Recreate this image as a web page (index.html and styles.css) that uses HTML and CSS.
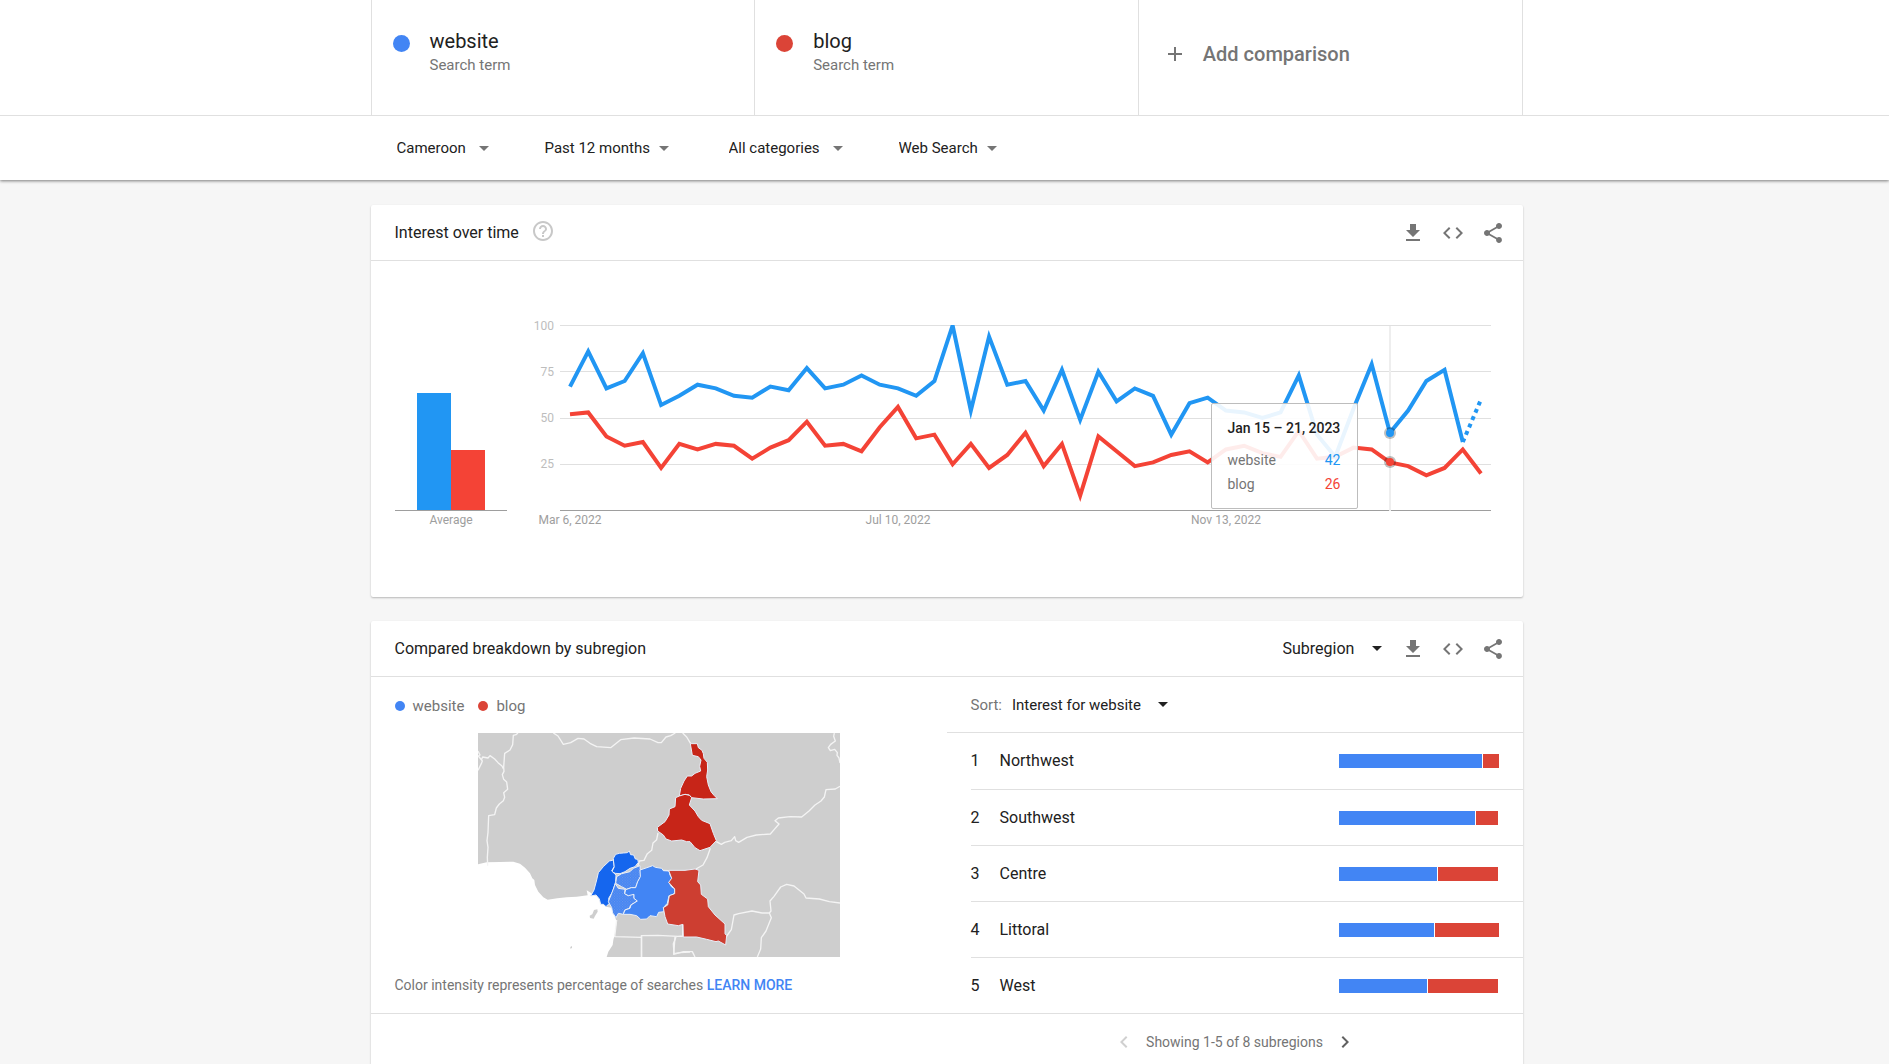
FILE: index.html
```html
<!DOCTYPE html>
<html lang="en">
<head>
<meta charset="utf-8">
<meta name="viewport" content="width=device-width, initial-scale=1">
<title>website, blog - Explore</title>
<link rel="stylesheet" href="styles.css">
</head>
<body>
<svg class="sprite" aria-hidden="true">
  <symbol id="i-download" viewBox="0 0 24 24"><path d="M19 9h-4V3H9v6H5l7 7 7-7zM5 18v2h14v-2H5z"/></symbol>
  <symbol id="i-code" viewBox="0 0 24 24"><path d="M9.4 16.6L4.8 12l4.6-4.6L8 6l-6 6 6 6 1.4-1.4zm5.2 0l4.6-4.6-4.6-4.6L16 6l6 6-6 6-1.4-1.4z"/></symbol>
  <symbol id="i-share" viewBox="0 0 24 24"><path d="M18 16.08c-.76 0-1.44.3-1.96.77L8.91 12.7c.05-.23.09-.46.09-.7s-.04-.47-.09-.7l7.05-4.11c.54.5 1.25.81 2.04.81 1.66 0 3-1.34 3-3s-1.34-3-3-3-3 1.34-3 3c0 .24.04.47.09.7L8.04 9.81C7.5 9.31 6.79 9 6 9c-1.66 0-3 1.34-3 3s1.34 3 3 3c.79 0 1.5-.31 2.04-.81l7.12 4.16c-.05.21-.08.43-.08.65 0 1.61 1.31 2.92 2.92 2.92 1.61 0 2.92-1.31 2.92-2.92s-1.31-2.92-2.92-2.92z"/></symbol>
</svg>

<header class="top">
  <div class="terms shell">
    <div class="term">
      <span class="dot dot-blue"></span>
      <div><div class="term-name">website</div><div class="term-type">Search term</div></div>
    </div>
    <div class="term">
      <span class="dot dot-red"></span>
      <div><div class="term-name">blog</div><div class="term-type">Search term</div></div>
    </div>
    <button class="add" type="button">
      <svg class="icon" viewBox="0 0 24 24"><path d="M19 13h-6v6h-2v-6H5v-2h6V5h2v6h6v2z"/></svg>
      Add comparison
    </button>
  </div>
  <div class="filter-bar">
    <form class="filters shell">
      <label class="drop"><select aria-label="Region"><option>Cameroon</option></select></label>
      <label class="drop drop-tight"><select aria-label="Time range"><option>Past 12 months</option></select></label>
      <label class="drop"><select aria-label="Category"><option>All categories</option></select></label>
      <label class="drop drop-tight"><select aria-label="Search type"><option>Web Search</option></select></label>
    </form>
  </div>
</header>

<main class="shell cards">
  <section class="card">
    <div class="card-head">
      <h2>Interest over time</h2>
      <button class="help" type="button" aria-label="Help">
        <svg class="icon" viewBox="0 0 24 24"><path d="M11 18h2v-2h-2v2zm1-16C6.48 2 2 6.48 2 12s4.48 10 10 10 10-4.48 10-10S17.52 2 12 2zm0 18c-4.41 0-8-3.59-8-8s3.59-8 8-8 8 3.59 8 8-3.59 8-8 8zm0-14c-2.21 0-4 1.79-4 4h2c0-1.1.9-2 2-2s2 .9 2 2c0 2-3 1.75-3 5h2c0-2.25 3-2.5 3-5 0-2.21-1.79-4-4-4z"/></svg>
      </button>
      <div class="actions">
        <button class="act" type="button" aria-label="Download"><svg class="icon"><use href="#i-download"/></svg></button>
        <button class="act" type="button" aria-label="Embed"><svg class="icon"><use href="#i-code"/></svg></button>
        <button class="act" type="button" aria-label="Share"><svg class="icon"><use href="#i-share"/></svg></button>
      </div>
    </div>
    <div class="chart">
      <svg class="chart-svg" viewBox="0 0 1152 336" role="img" aria-label="Interest over time for website and blog">
        <defs><clipPath id="plot"><rect x="189" y="64" width="931" height="186"/></clipPath></defs>
        <rect class="bar-a" x="46" y="132" width="34" height="117"/>
        <rect class="bar-b" x="80" y="189" width="34" height="60"/>
        <path class="axis" d="M24 249.5H136M189 249.5H1120"/>
        <path class="grid" d="M189 64.500H1120M189 110.500H1120M189 157.500H1120M189 203.500H1120"/>
        <path class="cursor" d="M1019 65V250"/>
        <g class="tick-y">
          <text x="183" y="69">100</text><text x="183" y="115">75</text>
          <text x="183" y="161">50</text><text x="183" y="207">25</text>
        </g>
        <g class="tick-x">
          <text x="80" y="263">Average</text><text x="199" y="263">Mar 6, 2022</text>
          <text x="527" y="263">Jul 10, 2022</text><text x="855" y="263">Nov 13, 2022</text>
        </g>
        <!-- series are in data units: week index, interest -->
        <g clip-path="url(#plot)">
          <g transform="translate(199 249.500) scale(18.220 -1.850)">
            <polyline class="line line-b" points="0,52 1,53 2,40 3,35 4,37 5,23 6,36 7,33 8,36 9,35 10,28 11,34 12,38 13,48 14,35 15,36 16,32 17,45 18,56 19,39 20,41 21,25 22,36 23,23 24,30 25,42 26,24 27,36 28,8 29,40 30,32 31,24 32,26 33,30 34,32 35,26 36,33 37,35 38,31 39,29 40,43 41,28 42,29 43,34 44,33 45,26 46,24 47,19 48,23 49,33 50,20"/>
            <polyline class="line line-a" points="0,67 1,86 2,66 3,70 4,85 5,57 6,62 7,68 8,66 9,62 10,61 11,67 12,65 13,77 14,66 15,68 16,73 17,68 18,66 19,62 20,70 21,100 22,54 23,94 24,68 25,70 26,54 27,76 28,49 29,75 30,59 31,66 32,62 33,41 34,58 35,61 36,54 37,53 38,50 39,53 40,73 41,41 42,29 43,55 44,79 45,42 46,54 47,70 48,76 49,37"/>
            <polyline class="line line-a dotted" points="49,37 50,60"/>
          </g>
        </g>
        <circle class="halo" cx="1019" cy="172" r="6"/><circle class="pt-a" cx="1019" cy="172" r="4"/>
        <circle class="halo" cx="1019" cy="201" r="6"/><circle class="pt-b" cx="1019" cy="201" r="4"/>
      </svg>
      <div class="tooltip">
        <div class="tip-date">Jan 15 – 21, 2023</div>
        <div class="tip-row"><span>website</span><span class="tip-a">42</span></div>
        <div class="tip-row"><span>blog</span><span class="tip-b">26</span></div>
      </div>
    </div>
  </section>

  <section class="card card-last">
    <div class="card-head">
      <h2>Compared breakdown by subregion</h2>
      <div class="actions">
        <label class="drop drop-dark drop-level"><select aria-label="Resolution"><option>Subregion</option></select></label>
        <button class="act" type="button" aria-label="Download"><svg class="icon"><use href="#i-download"/></svg></button>
        <button class="act" type="button" aria-label="Embed"><svg class="icon"><use href="#i-code"/></svg></button>
        <button class="act" type="button" aria-label="Share"><svg class="icon"><use href="#i-share"/></svg></button>
      </div>
    </div>
    <div class="split">
      <div class="map-side">
        <div class="legend">
          <span class="key"><span class="dot dot-blue"></span>website</span>
          <span class="key"><span class="dot dot-red"></span>blog</span>
        </div>
        <svg class="map" viewBox="0 0 1086 672" role="img" aria-label="Map of Cameroon by subregion">
          <defs>
            <pattern id="hatch" width="8" height="8" patternUnits="userSpaceOnUse"><rect width="8" height="8" fill="#4285f4"/><path d="M0 0h3v3H0zM4 4h3v3H4z" fill="#6c96ea"/></pattern>
          </defs>
          <rect width="1086" height="672" fill="#cecece"/>
          <g transform="translate(-24 -24)">
            <path fill="#fff" d="M24 418L50 412 90 411 130 410 150 416 165 428 180 445 187 460 193 465 195 480 205 500 220 517 233 524 262 520 290 517 320 515 353 511 350 496 362 503 383 515 408 545 425 548 435 575 440 590 436 620 430 645 428 660 415 680 410 696 24 696z"/>
            <path fill="#cecece" d="M372 555l10 -2 1 7 -8 13 -4 8 -11 -2 -1 -7 8 -4zM301 666l5-3v6l-5 2z"/>
            <g class="border">
              <path d="M144 24l-6 5-8 2-2 28-8 16-16 10-3 42 1 12-5 10 4 14 9 8 3 22-12 10 3 14-4 10-12 10-9 12-5 20-18 3-2 50-3 25 3 20-2 30 1 25"/>
              <path d="M24 78l6 12-5 3 12 15-3 8-10 20M34 105l4-9 16 3 6-7 14 10 10 11 12 10 4 8"/>
              <path d="M250 24l14 9 16 25 22-5 22-13 18 2 18 13 20 10 42 3 30-24 40-5 48 3 24 11 10 0 14-17 14-4 14-8"/>
              <path d="M564 324l-4 20-11 10-4 22-13 10-10 20-14 2-5 16M511 434l85 3h74"/>
              <path d="M440 585l-6 50 80 2V632l50-1 60 3 14-1M514 635v61M638 636V600M618 636l-8 20 2 30 18-3 30-2"/>
            </g>
            <path class="region" fill="#1566ee" d="M430 400L437 388 448 385 460 384 472 383 478 378 482 389 491 390 496 402 503 403 505 412 495 425 480 430 465 440 450 446 436 445 425 440 432 428z"/>
            <path class="region" fill="#1566ee" d="M430 405L432 425 425 438 438 450 437 470 428 500 416 520 418 535 408 545 400 538 392 538 388 522 378 510 362 513 372 495 380 465 385 443 400 425 418 408z"/>
            <path class="region" fill="url(#hatch)" d="M440 455L455 446 480 440 490 430 510 422 512 455 503 470 497 488 484 488 470 493 455 485 437 475z"/>
            <path class="region" fill="url(#hatch)" d="M436 476L445 490 465 493 464 506 475 512 485 506 492 508 492 520 502 528 482 540 478 550 464 555 460 568 445 565 438 578 428 564 425 548 415 530 425 505z"/>
            <path class="region" fill="#4285f4" d="M510 435L525 430 548 422 556 427 575 430 580 437 597 438 600 450 606 460 597 473 605 486 614 491 614 503 610 508 597 512 592 535 580 548 582 560 566 562 560 575 540 572 530 582 512 583 500 572 480 568 460 568 465 555 480 550 483 540 502 528 492 520 492 508 475 512 464 506 467 494 484 488 497 488 503 470 511 455z"/>
          </g>
          <g transform="translate(486 -24)">
            <g class="border">
              <path d="M128 24l12 12 12 20M229 350l15 8 10-6 20-5 10-12 3 12 9 5 25-15 28-7 42-3 12-14 14-16-12-10 10-8 35-4 35 1 22-18 18-18 18-12 10-12 5-22 28-2 14-8"/>
              <path d="M583 24l-2 10 5 14-14 10-7 10 6 9 13-4 8 10-1 8 6 8 3 15"/>
              <path d="M211 370l-10 28-12 22-21 12"/>
              <path d="M258 636l16-22 8-44 14-4 40-8 30 6 22 0 5-6-3-30 12-14 20-28 18-8 22 5 30 24 6 12 40 3 30 8 32 4M388 564l6 14-16 40-14 20-2 34-10 24"/>
              <path d="M5 630v66M105 636l-4 52 30-8 26 0 8 16"/>
            </g>
            <path class="region" fill="#c72518" d="M151 56L172 56 175 68 186 76 190 86 192 100 202 112 203 135 200 155 205 180 213 200 222 211 232 221 190 222 155 218 148 210 135 208 118 213 122 190 132 168 142 153 155 153 165 145 182 138 179 124 183 105 175 95 157 91z"/>
            <path class="region" fill="#c72518" d="M118 213L135 208 148 211 155 218 148 240 165 258 175 275 185 286 210 296 220 325 229 347 210 367 180 377 165 368 150 350 140 350 125 345 95 348 78 342 70 330 53 318 52 307 75 290 87 270 88 252 105 245 107 218z"/>
            <path class="region" fill="#cd3e31" d="M86 436L135 436 165 432 177 436 173 470 182 480 184 508 203 522 205 545 225 570 255 597 255 626 260 632 257 660 235 648 228 650 200 643 170 636 130 636 129 598 115 602 83 597 75 575 70 548 83 540 88 512 104 506 104 492 86 472 95 460z"/>
          </g>
        </svg>
        <p class="note">Color intensity represents percentage of searches <a href="#learn">LEARN MORE</a></p>
      </div>
      <div class="list-side">
        <div class="sort">
          <label for="sort">Sort:</label>
          <span class="drop drop-dark"><select id="sort"><option>Interest for website</option></select></span>
        </div>
        <table class="ranks">
          <tbody>
          <tr><td class="num">1</td><td>Northwest</td><td class="bar"><div class="split-bar"><i class="seg-a" style="width:143px"></i><i class="seg-b" style="width:16px"></i></div></td></tr>
          <tr><td class="num">2</td><td>Southwest</td><td class="bar"><div class="split-bar"><i class="seg-a" style="width:136px"></i><i class="seg-b" style="width:22px"></i></div></td></tr>
          <tr><td class="num">3</td><td>Centre</td><td class="bar"><div class="split-bar"><i class="seg-a" style="width:98px"></i><i class="seg-b" style="width:60px"></i></div></td></tr>
          <tr><td class="num">4</td><td>Littoral</td><td class="bar"><div class="split-bar"><i class="seg-a" style="width:95px"></i><i class="seg-b" style="width:64px"></i></div></td></tr>
          <tr><td class="num">5</td><td>West</td><td class="bar"><div class="split-bar"><i class="seg-a" style="width:88px"></i><i class="seg-b" style="width:70px"></i></div></td></tr>
          </tbody>
        </table>
      </div>
    </div>
    <div class="card-foot">
      <div class="pager">
        <button class="page-btn" type="button" aria-label="Previous" disabled><svg class="icon" viewBox="0 0 24 24"><path d="M15.410 7.410L14 6l-6 6 6 6 1.410-1.410L10.830 12z"/></svg></button>
        <span>Showing 1-5 of 8 subregions</span>
        <button class="page-btn" type="button" aria-label="Next"><svg class="icon" viewBox="0 0 24 24"><path d="M10 6L8.590 7.410 13.170 12l-4.580 4.590L10 18l6-6z"/></svg></button>
      </div>
    </div>
  </section>
</main>
</body>
</html>
```
FILE: styles.css
```css
* { box-sizing: border-box; }

body {
  margin: 0;
  background: #f6f6f6;
  color: #212121;
  font: 16px/24px Roboto, "Liberation Sans", sans-serif;
}

button, select {
  margin: 0;
  padding: 0;
  border: 0;
  background: none;
  color: inherit;
  font: inherit;
}

.sprite { position: absolute; width: 0; height: 0; }
.icon { display: block; width: 24px; height: 24px; fill: currentColor; }

/* the page column sits slightly right of centre */
.top, .cards { padding-left: 4px; }
.shell { max-width: 1152px; margin: 0 auto; }

.top {
  background: #fff;
  box-shadow: 0 1px 3px rgba(0, 0, 0, .5);
}

.terms {
  display: grid;
  grid-template-columns: repeat(3, 1fr);
  height: 115px;
  border-right: 1px solid #e0e0e0;
}
.term, .add { border-left: 1px solid #e0e0e0; }
.term {
  display: flex;
  gap: 20px;
  padding: 28px 21px;
}
.dot { flex: none; border-radius: 50%; }
.dot-blue { background: #4285f4; }
.dot-red { background: #db4437; }
.term .dot { width: 17px; height: 17px; margin-top: 7px; }
.term-name { font-size: 20px; line-height: 26px; }
.term-type { color: #757575; font-size: 15px; line-height: 22px; }
.add {
  display: flex;
  align-items: center;
  gap: 16px;
  padding: 0 24px 8px;
  color: #757575;
  font-size: 20px;
  font-weight: 500;
}

.filter-bar {
  margin-left: -4px;
  padding-left: 4px;
  border-top: 1px solid #e0e0e0;
}
.filters {
  display: flex;
  align-items: center;
  gap: 56px;
  height: 64px;
  padding: 0 26px;
  font-size: 15px;
}

.drop { display: inline-flex; align-items: center; gap: 12px; }
.drop select { appearance: none; height: 24px; }
.drop::after {
  content: "";
  border: 5px solid transparent;
  border-top-color: #757575;
  border-bottom: 0;
}
.drop-tight { gap: 8px; margin-right: 4px; }
.drop-dark { gap: 17px; }
.drop-dark::after { border-top-color: #212121; }
.drop-level { margin-right: 11px; }

.cards {
  display: grid;
  gap: 24px;
  max-width: 1156px;
  margin-top: 25px;
}
.card {
  min-width: 0;
  border-radius: 2px;
  background: #fff;
  box-shadow: 0 1px 2px rgba(0, 0, 0, .25);
}
.card-last { border-radius: 2px 2px 0 0; }
.card-head {
  display: flex;
  align-items: center;
  height: 56px;
  padding: 0 10px 0 24px;
  border-bottom: 1px solid #e0e0e0;
}
h2 { margin: 0; font-size: 16px; font-weight: 400; line-height: 24px; }
.help { margin: 0 0 4px 12px; color: #c8c8c8; }
.actions { display: flex; align-items: center; margin-left: auto; }
.act { display: grid; place-items: center; width: 40px; height: 40px; color: #757575; }

.chart { position: relative; }
.chart-svg { display: block; width: 100%; font-size: 12px; }
.bar-a { fill: #2196f3; }
.bar-b { fill: #f44336; }
.grid { stroke: #e0e0e0; }
.axis { stroke: #9e9e9e; }
.cursor { stroke: #eee; stroke-width: 2; }
.tick-y { fill: #bdbdbd; text-anchor: end; }
.tick-x { fill: #9e9e9e; text-anchor: middle; }
.line { fill: none; stroke-width: 4; vector-effect: non-scaling-stroke; stroke-miterlimit: 10; }
.line-a { stroke: #2196f3; }
.line-b { stroke: #f44336; }
.dotted { stroke-dasharray: 4 4; }
.pt-a { fill: #2196f3; }
.pt-b { fill: #f44336; }
.halo { fill: #000; fill-opacity: .25; }

.tooltip {
  position: absolute;
  top: 142px;
  right: 165px;
  width: 147px;
  height: 106px;
  padding: 12px 16px;
  border: 1px solid #bdbdbd;
  border-radius: 2px;
  background: rgba(255, 255, 255, .9);
  font-size: 14px;
  line-height: 24px;
}
.tip-date { margin-bottom: 8px; font-weight: 500; white-space: nowrap; }
.tip-row { display: flex; justify-content: space-between; color: #757575; }
.tip-a { color: #2196f3; }
.tip-b { color: #f44336; }

.split { display: grid; grid-template-columns: 1fr 1fr; }
.map-side { padding: 17px 24px 0; }
.legend { display: flex; gap: 14px; color: #757575; font-size: 15px; }
.key { display: flex; align-items: center; gap: 8px; }
.key .dot { width: 10px; height: 10px; }
.map { display: block; width: 362px; max-width: 100%; margin: 15px auto 0; }
.border path { fill: none; stroke: #f4f4f4; stroke-width: 4; stroke-linejoin: round; }
.region { stroke: #e8eef8; stroke-width: 3; stroke-linejoin: round; }
.note { margin: 16px 0; color: #757575; font-size: 14px; }
.note a { color: #4285f4; font-weight: 500; text-decoration: none; }

.sort {
  display: flex;
  align-items: center;
  gap: 10px;
  height: 56px;
  padding-left: 24px;
  border-bottom: 1px solid #e0e0e0;
  font-size: 15px;
}
.sort label { color: #757575; }
.ranks {
  width: calc(100% - 24px);
  margin-left: 24px;
  border-spacing: 0;
}
.ranks td { height: 56px; padding: 0; }
.ranks tr + tr td { border-top: 1px solid #e0e0e0; }
.ranks .num { width: 29px; }
.ranks .bar { width: 184px; }
.split-bar { display: flex; gap: 1px; height: 14px; }
.seg-a { background: #4285f4; }
.seg-b { background: #db4437; }

.card-foot {
  display: grid;
  grid-template-columns: 1fr 1fr;
  height: 51px;
  border-top: 1px solid #e0e0e0;
}
.pager {
  display: flex;
  grid-column: 2;
  justify-content: center;
  align-items: center;
  gap: 10px;
  height: 56px;
  color: #757575;
  font-size: 14px;
}
.page-btn { color: #616161; }
.page-btn:disabled { color: #d0d0d0; }
```
